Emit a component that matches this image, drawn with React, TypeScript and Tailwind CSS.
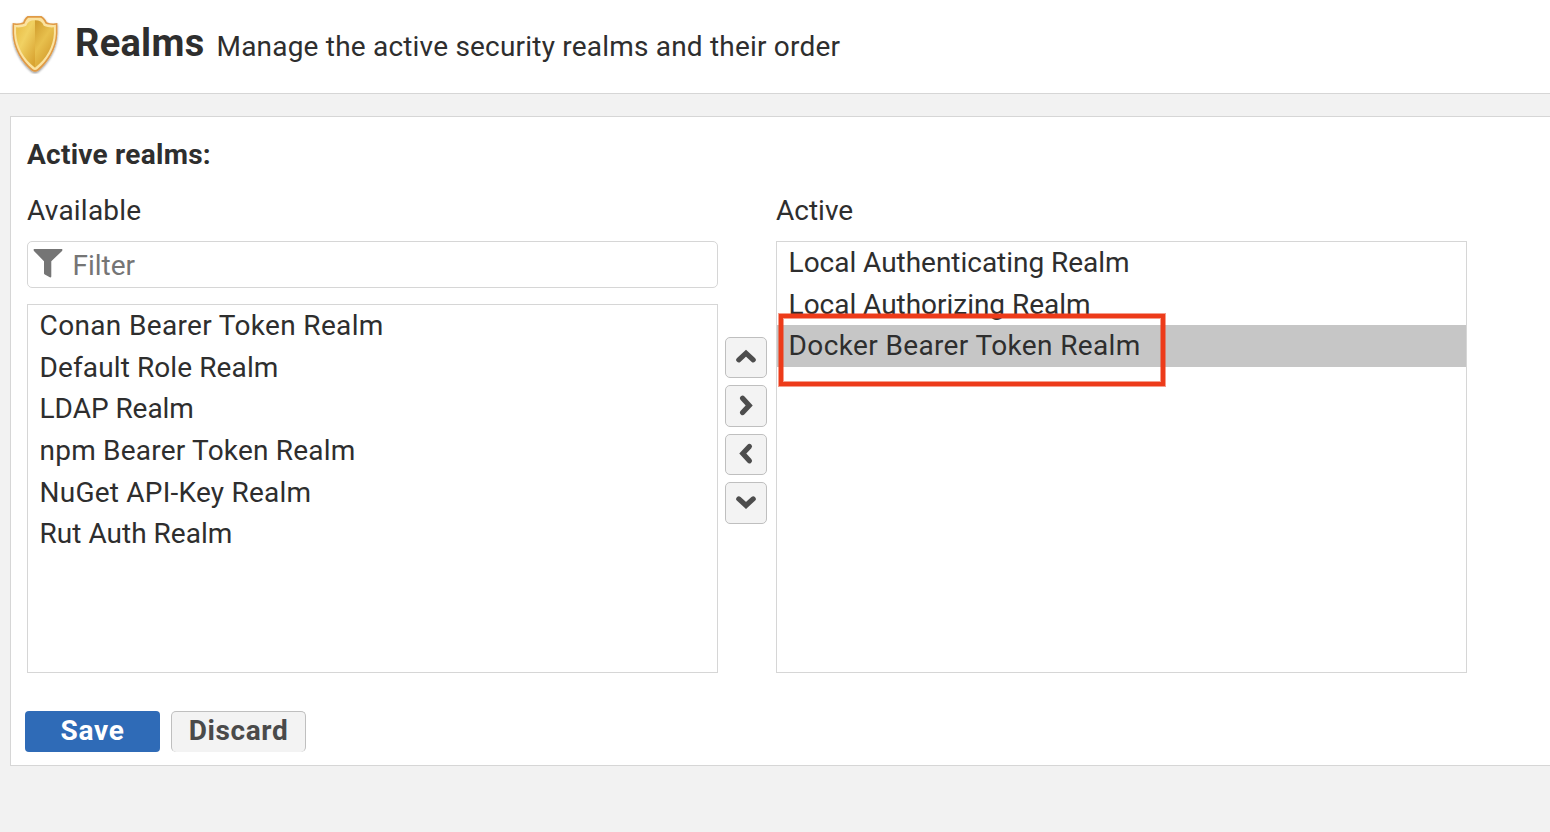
import { useState } from "react";

type Item = { name: string; tracking: string };

const available: Item[] = [
  { name: "Conan Bearer Token Realm", tracking: "tracking-[0.34px]" },
  { name: "Default Role Realm", tracking: "tracking-[0.1px]" },
  { name: "LDAP Realm", tracking: "tracking-[-0.05px]" },
  { name: "npm Bearer Token Realm", tracking: "tracking-[0.21px]" },
  { name: "NuGet API-Key Realm", tracking: "tracking-[0.22px]" },
  { name: "Rut Auth Realm", tracking: "tracking-[0.01px]" },
];

const active: Item[] = [
  { name: "Local Authenticating Realm", tracking: "tracking-[-0.03px]" },
  { name: "Local Authorizing Realm", tracking: "tracking-[-0.03px]" },
  { name: "Docker Bearer Token Realm", tracking: "tracking-[0.37px]" },
];

function ShieldIcon() {
  return (
    <svg className="block h-[64px] w-[52px] shrink-0" viewBox="0 0 52 64">
      <defs>
        <linearGradient id="left" x1="0" y1="0" x2="0.8" y2="1">
          <stop offset="0" stopColor="#e6b840" />
          <stop offset="0.45" stopColor="#f1d162" />
          <stop offset="1" stopColor="#d9a432" />
        </linearGradient>
        <linearGradient id="right" x1="0" y1="0" x2="0.6" y2="1">
          <stop offset="0" stopColor="#cf9a2b" />
          <stop offset="0.5" stopColor="#e8c04d" />
          <stop offset="1" stopColor="#d29a2b" />
        </linearGradient>
        <filter id="shade" x="-20%" y="-20%" width="140%" height="150%">
          <feDropShadow dx="0" dy="1.3" stdDeviation="1" floodColor="#000" floodOpacity="0.45" />
        </filter>
      </defs>
      <path
        filter="url(#shade)"
        fill="#e09a45"
        d="M18.5 6H32.5C35 7.5 36.7 9.5 37.8 12.2C41 13.5 44.5 13.7 48.4 13V23.5C47.8 38 40 51.5 29.5 60.5Q26 63 22.5 60.5C12 51.5 4.2 38 3.6 23.5V13C7.5 13.7 11 13.5 14.2 12.2C15 9.5 16.2 7.5 18.5 6Z"
      />
      <path
        fill="#fbe3a0"
        d="M19.4 7.7H31.8C34 9 35.4 11 36.4 13.6C39.8 15 43.3 15.3 46.9 14.8V23.5C46.3 37.3 38.8 50.3 28.5 59Q26 60.8 23.5 59C13.2 50.3 5.7 37.3 5.1 23.5V14.8C8.7 15.3 12.2 15 15.6 13.6C16.4 11 17.6 9 19.4 7.7Z"
      />
      <path
        fill="url(#left)"
        d="M26 10.2C21.5 10.2 18.5 12 17.2 15.7C14 17.1 10.6 17.6 7.1 17.3V23.5C7.8 37 15 49 26 57.8Z"
      />
      <path
        fill="url(#right)"
        d="M26 10.2C30.5 10.2 33.5 12 34.8 15.7C38 17.1 41.4 17.6 44.9 17.3V23.5C44.2 37 37 49 26 57.8Z"
      />
    </svg>
  );
}

function MoveButton({ d, label, size }: { d: string; label: string; size: string }) {
  return (
    <button
      aria-label={label}
      className={`flex w-[42px] justify-center rounded-[5px] border border-[#bfbfbf] bg-[#f3f3f3] ${size}`}
    >
      <svg className="block h-[38px] w-[40px]" viewBox="0 0 40 38">
        <path d={d} fill="none" stroke="#4d4d4d" strokeWidth="5.2" strokeLinecap="round" strokeLinejoin="miter" />
      </svg>
    </button>
  );
}

function RealmList({ items, selected, onSelect }: { items: Item[]; selected: string; onSelect: (n: string) => void }) {
  return (
    <ul>
      {items.map(({ name, tracking }) => (
        <li
          key={name}
          onClick={() => onSelect(name)}
          className={`h-[41.67px] pl-[11.6px] text-[28px] leading-[41.2px] whitespace-nowrap ${tracking} ${selected === name ? "bg-[#c6c6c6]" : ""}`}
        >
          {name}
        </li>
      ))}
    </ul>
  );
}

export default function App() {
  const [selected, setSelected] = useState("Docker Bearer Token Realm");

  return (
    <div className="flex h-[832px] w-[1550px] flex-col overflow-hidden bg-[#f2f2f2] font-['Roboto',sans-serif] text-[#2e2e2e]">
      <header className="flex h-[94px] shrink-0 border-b border-[#d6d6d6] bg-white pt-[10px] pl-[9px]">
        <ShieldIcon />
        <div className="flex h-[64px] items-baseline pl-[14px] whitespace-nowrap">
          <h1 className="text-[38px] leading-[66px] font-bold tracking-[0.3px]">Realms</h1>
          <p className="pl-[12px] text-[28px] tracking-[0.2px]">Manage the active security realms and their order</p>
        </div>
      </header>

      <main className="mt-[22px] ml-[10px] h-[650px] border border-r-0 border-[#d6d6d6] bg-white pl-[16px]">
        <h2 className="mt-[17px] h-[40px] text-[28px] leading-[42px] font-bold tracking-[0.25px]">Active realms:</h2>

        <div className="mt-[16px] flex">
          <section className="w-[691px]">
            <h3 className="h-[40px] text-[28px] leading-[42px] tracking-[0.22px]">Available</h3>
            <div className="mt-[11px] flex h-[47px] rounded-[5px] border border-[#d6d6d6] pl-[4.5px]">
              <svg className="mt-[7px] block h-[29px] w-[30px]" viewBox="0 0 30 29">
                <path
                  fill="#757575"
                  d="M1 0H29Q30 1 28.8 2.2L18.3 12.2V27.5Q18 28.8 16.8 28.3L11.8 25.6Q11 25 11 24.2V12.2L1.2 2.2Q0 1 1 0Z"
                />
              </svg>
              <input
                placeholder="Filter"
                className="h-[45px] w-[600px] pt-[1px] pl-[10px] text-[28px] leading-[44px] outline-none placeholder:text-[#757575]"
              />
            </div>
            <div className="mt-[16px] h-[369px] border border-[#d6d6d6]">
              <RealmList items={available} selected={selected} onSelect={setSelected} />
            </div>
          </section>

          <div className="flex w-[58px] flex-col pt-[147px] pl-[7px]">
            <MoveButton label="Move up" size="h-[41px]" d="M12.8 21.8L20 15.2L27.2 21.8" />
            <MoveButton label="Add" size="mt-[7px] h-[42px]" d="M16.6 12.2L23.2 19.4L16.6 26.6" />
            <MoveButton label="Remove" size="mt-[7px] h-[41px]" d="M23.4 11.4L16.8 18.6L23.4 25.8" />
            <MoveButton label="Move down" size="mt-[7px] h-[42px]" d="M12.8 15.9L20 22.5L27.2 15.9" />
          </div>

          <section className="w-[691px]">
            <h3 className="h-[40px] text-[28px] leading-[42px]">Active</h3>
            <div className="relative mt-[11px] h-[432px] border border-[#d6d6d6]">
              <RealmList items={active} selected={selected} onSelect={setSelected} />
              <div className="pointer-events-none absolute top-[72px] left-[2px] h-[72px] w-[386px] border-4 border-[#ed3b1a] shadow-[0_0_0_1px_rgba(237,59,26,0.5),inset_0_0_0_1px_rgba(237,59,26,0.5)]" />
            </div>
          </section>
        </div>

        <div className="mt-[38px] -ml-[2px] flex gap-[11px] text-[28px] leading-[37px] font-bold">
          <button className="h-[41px] w-[135px] rounded-[4px] bg-[#2f6bb7] pb-[2px] tracking-[0.7px] text-white">Save</button>
          <button className="h-[41px] w-[135px] rounded-[5px] border border-b-0 border-[#bfbfbf] bg-[#f3f3f3] pb-[4px] tracking-[0.6px] text-[#4a4a4a]">
            Discard
          </button>
        </div>
      </main>
    </div>
  );
}
